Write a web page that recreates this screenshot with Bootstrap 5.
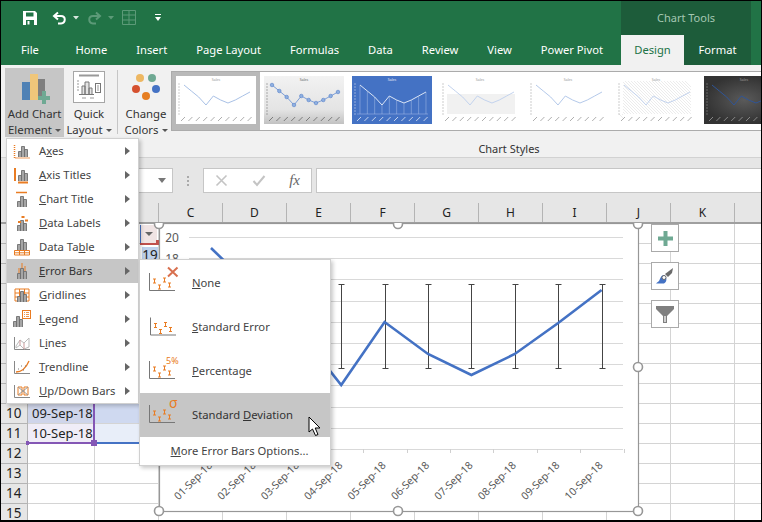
<!DOCTYPE html>
<html lang="en">
<head>
  <meta charset="UTF-8" />
  <title>Excel - Add Chart Element</title>
  <link href="https://cdn.jsdelivr.net/npm/bootstrap@5.3.0/dist/css/bootstrap.min.css" rel="stylesheet"/>
  <style>
    body { margin: 0; background: #fff; font-family: "Noto Sans", "Liberation Sans", sans-serif; font-size: 12px; }
    .app { position: relative; width: 762px; height: 522px; overflow: hidden; color: #333; }
    .app::after { content: ""; position: absolute; inset: 0; border: 1px solid #000; border-bottom-width: 2px; pointer-events: none; }

    .titlebar { background: #217346; height: 65px; }
    .qat { height: 35px; padding-left: 22px; }
    .q-undo { margin-left: 14px; }
    .q-more { margin-left: 19px; }
    .chart-tools { width: 130px; margin-right: 11px; background: #1d5c3a; color: #a4c7b2; font-size: 11px; line-height: 35px; text-align: center; }
    .tabs { height: 30px; padding-right: 11px; white-space: nowrap; }
    .tabs .nav-link { color: #fff; padding: 0 14.5px; line-height: 30px; font-size: 11.2px; }
    .tabs .nav-link.first { padding: 0 22px 0 21px; }
    .tabs .nav-link.tool { background: #1d5c3a; padding: 0; width: 67px; text-align: center; }
    .tabs .nav-link.current { background: #f1f1f1; color: #217346; padding: 0; width: 63px; text-align: center; }

    .ribbon { background: #f1f1f1; height: 93px; border-bottom: 1px solid #d2d2d2; padding: 3px 0 0 5px; overflow: hidden; }
    .rb-btn { height: 69px; text-align: center; line-height: 16px; font-size: 11.4px; color: #333; flex: none; white-space: nowrap; }
    .rb-btn svg { display: block; margin: 0 auto 1px; }
    .rb-btn.hot { background: #c6c6c6; }
    .rb-btn .caret { display: inline-block; border: 3px solid transparent; border-top: 3px solid #555; border-bottom: 0; margin-left: 3px; vertical-align: 2px; }
    .rb-add { width: 59px; }
    .rb-quick { width: 46px; margin-left: 2px; }
    .rb-colors { width: 50px; margin-left: 3px; }
    .rb-sep { width: 1px; height: 64px; background: #c6c6c6; margin: 2px 0 0 5px; flex: none; }
    .styles-group { width: 676px; flex: none; }
    .gallery { height: 60px; margin-top: 3px; background: #fff; border: 1px solid #ababab; border-width: 1px 0 1px 1px; overflow: hidden; }
    .thumb { width: 88px; height: 58px; padding: 4px; flex: none; }
    .thumb.selected { background: #b9b9b9; }
    .thumb svg { display: block; }
    .group-label { line-height: 17px; margin-top: 9px; text-align: center; font-size: 11px; color: #333; }

    .formula { background: #e6e6e6; height: 45px; padding: 10px 0 10px 6px; }
    .fbox { background: #fff; border: 1px solid #c6c6c6; height: 25px; }
    .namebox { width: 167px; padding-right: 6px; }
    .namebox i { border: 4px solid transparent; border-top: 5px solid #777; border-bottom: 0; }
    .grip { width: 30px; }
    .grip i { width: 2px; height: 2px; background: #aaa; display: block; margin: 1px auto; }
    .fxbox { width: 109px; padding: 0 11px; margin-right: 4px; }
    .fx { font-family: "Liberation Serif", serif; font-style: italic; font-size: 15px; color: #666; }

    .sheet { table-layout: fixed; width: 762px; font-size: 13.5px; color: #222; }
    .sheet th, .sheet td { height: 20px; padding: 0; border: 1px solid #d4d4d4; line-height: 18px; white-space: nowrap; font-weight: 400; overflow: hidden; }
    .sheet thead th { background: #e6e6e6; border-color: #b4b4b4; border-bottom: 2px solid #9f9f9f; border-top: 0; text-align: center; font-size: 12px; color: #222; }
    .sheet tbody th { background: #e6e6e6; border-color: #b4b4b4; text-align: center; border-left: 0; }
    .sheet td.date { padding-left: 4px; font-size: 13px; }
    .sel1 { background: #cfd5ea; } .sel2 { background: #cfd9f0; }
    .sel3 { background: #f0edf7; } .sel4 { background: #e8eef9; }

    .filter-btn { position: absolute; left: 140px; top: 225px; width: 17px; height: 18px; background: #f0e4e4; border-left: 1px solid #4472c4; }
    .filter-btn::after { content: ""; position: absolute; left: 4px; top: 7px; border: 4px solid transparent; border-top: 4px solid #666; border-bottom: 0; }
    .red-range { position: absolute; left: 140px; top: 243px; width: 17px; height: 2px; background: #c0504d; }
    .red-range::after { content: ""; position: absolute; right: -2px; top: -3px; width: 3px; height: 5px; background: #c0504d; }
    .cell-19 { position: absolute; left: 142px; top: 247px; width: 16px; height: 18px; background: #bdd0ec; font-size: 13.5px; line-height: 17px; color: #222; text-align: center; }
    .range { position: absolute; left: 27px; top: 402px; width: 68px; height: 42px; border-right: 2px solid #8457b5; border-bottom: 2px solid #8457b5; }
    .range::before { content: ""; position: absolute; left: -1px; bottom: -3px; width: 3px; height: 4px; background: #8457b5; }
    .range::after { content: ""; position: absolute; right: -4px; bottom: -4px; width: 6px; height: 6px; background: #8457b5; }
    .blue-range { position: absolute; left: 97px; top: 442px; width: 43px; height: 2px; background: #4472c4; }

    .chart { position: absolute; left: 150px; top: 223px; width: 498px; height: 299px; display: block; }
    .side-btn { position: absolute; left: 651px; width: 28px; height: 28px; background: #fff; border: 1px solid #aaa; }
    .side-1 { top: 224px; } .side-2 { top: 262px; } .side-3 { top: 300px; }

    .xl-menu { background: #fff; border: 1px solid #d0d0d0; border-radius: 0; padding: 0; min-width: 0; font-size: 11.25px; box-shadow: 2px 2px 4px rgba(0,0,0,.22); }
    .main-menu { left: 6px; top: 138px; width: 133px; height: 266px; }
    .sub-menu { left: 139px; top: 259px; width: 192px; height: 207px; padding-top: 1px; }
    .xl-menu .dropdown-item { color: #444; padding: 0; display: flex; align-items: center; background: transparent; }
    .xl-menu .dropdown-item.hot { background: #c6c6c6; color: #333; }
    .main-menu .dropdown-item { height: 24px; padding-left: 5px; }
    .main-menu .dropdown-item svg { margin-right: 7px; flex: none; }
    .main-menu .dropdown-item::after { content: ""; margin-left: auto; margin-right: 8px; border: 4.5px solid transparent; border-left: 5px solid #666; border-right: 0; }
    .sub-menu .dropdown-item { height: 44px; padding-left: 9px; }
    .sub-menu .dropdown-item svg { margin-right: 8px; flex: none; }
    .sub-menu .more { height: 29px; justify-content: center; }
    .cursor { position: absolute; left: 308px; top: 416px; z-index: 1001; }
  </style>
</head>
<body>
<svg width="0" height="0" class="position-absolute">
  <defs>
    <g id="bars">
      <path d="M5.5 15V9.5H8.5V15M8.5 15V4.5H11.5V15M11.5 15V7.5H14.5V15" fill="#a6a6a6" stroke="#6f6f6f" stroke-width=".9"/>
    </g>
    <g id="ebars" fill="none" stroke="#e97c23" stroke-width="1">
      <path d="M4 8h3M5.5 8v4M4 12h3"/>
      <path d="M9 14h3M10.500 14v4M9 18h3"/>
      <path d="M14 7h3M15.500 7v4M14 11h3"/>
      <path d="M19 12h3M20.500 12v4M19 16h3"/>
      <path d="M.5 2V19.500H26" stroke="#777"/>
    </g>
    <linearGradient id="silver" x1="0" y1="0" x2="0" y2="1">
      <stop offset="0" stop-color="#f2f2f2"/><stop offset=".7" stop-color="#e4e4e4"/><stop offset="1" stop-color="#c2c2c2"/>
    </linearGradient>
    <radialGradient id="coal"><stop offset="0" stop-color="#5a5a5a"/><stop offset="1" stop-color="#333"/></radialGradient>
  </defs>
</svg>

<div class="app">
  <div class="titlebar">
    <div class="qat d-flex align-items-center">
      <svg width="16" height="16" viewBox="0 0 16 16"><path d="M1 1H13L15 3V15H1Z" fill="#fff"/><path d="M4 2.500H11.500V6.500H4Z" fill="#217346"/><path d="M4 10H12V15H4Z" fill="#217346"/><path d="M5.500 11H7.500V14.500H5.500Z" fill="#fff"/></svg>
      <svg class="q-undo" width="15" height="14" viewBox="0 0 15 14"><path d="M6 1.500L2 5L6 8.500M2 5H9C14 5 14 12 9 12.500H6" fill="none" stroke="#fff" stroke-width="2"/></svg>
      <svg class="ms-1" width="12" height="6" viewBox="0 0 12 6"><path d="M2 1H8L5 4.500Z" fill="#d7e7de"/></svg>
      <svg class="ms-1" width="15" height="14" viewBox="0 0 15 14"><path d="M9 1.500L13 5L9 8.500M13 5H6C1 5 1 12 6 12.500H9" fill="none" stroke="#5c9a78" stroke-width="2"/></svg>
      <svg class="ms-1" width="12" height="6" viewBox="0 0 12 6"><path d="M2 1H8L5 4.500Z" fill="#5c9a78"/></svg>
      <svg class="ms-1" width="14" height="15" viewBox="0 0 14 15"><path d="M.5.5H13.500V14.500H.5ZM.5 5H13.500M.5 10H13.500M7 .5V14.500" fill="none" stroke="#5c9a78"/></svg>
      <svg class="q-more" width="6" height="8" viewBox="0 0 6 8"><path d="M0 0H6V1H0ZM0 3H6L3 7Z" fill="#fff"/></svg>
      <div class="chart-tools ms-auto">Chart Tools</div>
    </div>
    <ul class="nav tabs flex-nowrap">
      <li class="nav-item"><a class="nav-link first" href="#">File</a></li>
      <li class="nav-item"><a class="nav-link" href="#">Home</a></li>
      <li class="nav-item"><a class="nav-link" href="#">Insert</a></li>
      <li class="nav-item"><a class="nav-link" href="#">Page Layout</a></li>
      <li class="nav-item"><a class="nav-link" href="#">Formulas</a></li>
      <li class="nav-item"><a class="nav-link" href="#">Data</a></li>
      <li class="nav-item"><a class="nav-link" href="#">Review</a></li>
      <li class="nav-item"><a class="nav-link" href="#">View</a></li>
      <li class="nav-item"><a class="nav-link" href="#">Power Pivot</a></li>
      <li class="nav-item ms-auto"><a class="nav-link current" href="#">Design</a></li>
      <li class="nav-item"><a class="nav-link tool" href="#">Format</a></li>
    </ul>
  </div>

  <div class="ribbon d-flex">
    <div class="rb-btn rb-add hot">
      <svg width="59" height="37" viewBox="5 68 59 37"><rect x="22" y="82" width="8" height="18" fill="#4f81b5"/><rect x="30" y="74" width="8" height="26" fill="#efc67a"/><rect x="38" y="79" width="7" height="18" fill="#7f7f7f"/><path d="M38 96H42V91H46V96H50V100H46V104H42V100H38Z" fill="#6fa993"/></svg>
      Add Chart<br>Element<span class="caret"></span>
    </div>
    <div class="rb-btn rb-quick">
      <svg width="34" height="37" viewBox="0 -3 34 37"><rect x="1.500" y=".5" width="31" height="31" fill="#fff" stroke="#a6a6a6"/><path d="M7 4.500H27" stroke="#999" stroke-width="2"/><path d="M10 23V15H13V23M13 23V11H17V23M17 23V17H20V23M7 23.500H22" fill="#e4e4e4" stroke="#777"/><rect x="23.500" y="12.500" width="5" height="9" fill="#fff" stroke="#777"/><path d="M25 15h2M25 17h2M25 19h2M5 10h2M5 13h2M5 16h2M5 19h2M10 27h4M18 27h4" stroke="#999"/></svg>
      Quick<br>Layout<span class="caret"></span>
    </div>
    <div class="rb-sep"></div>
    <div class="rb-colors rb-btn">
      <svg width="36" height="37" viewBox="1 0 36 37"><circle cx="13" cy="10" r="4" fill="#edb762"/><circle cx="25" cy="10" r="4" fill="#6fa993"/><circle cx="9" cy="21" r="4" fill="#d5512f"/><circle cx="29" cy="21" r="4" fill="#4472c4"/><circle cx="19" cy="28" r="4" fill="#e67e22"/></svg>
      Change<br>Colors<span class="caret"></span>
    </div>
    <div class="styles-group">
      <div class="gallery d-flex" id="gallery"></div>
      <div class="group-label">Chart Styles</div>
    </div>
  </div>

  <div class="formula d-flex">
    <div class="fbox namebox d-flex align-items-center justify-content-end"><i></i></div>
    <div class="grip d-flex flex-column justify-content-center"><i></i><i></i><i></i></div>
    <div class="fbox fxbox d-flex align-items-center justify-content-between">
      <svg width="13" height="13" viewBox="0 0 13 13"><path d="M1.500 1.500L11.500 11.500M11.500 1.500L1.500 11.500" stroke="#c4c4c4" stroke-width="1.600"/></svg>
      <svg width="14" height="13" viewBox="0 0 14 13"><path d="M1.500 7L5 11L12.500 2" fill="none" stroke="#c4c4c4" stroke-width="2"/></svg>
      <span class="fx">fx</span>
    </div>
    <div class="fbox flex-grow-1"></div>
  </div>

  <table class="sheet" id="sheet">
    <colgroup><col style="width:27px"><col style="width:67px"><col style="width:64px"><col style="width:64px"><col style="width:64px"><col style="width:64px"><col style="width:64px"><col style="width:64px"><col style="width:64px"><col style="width:64px"><col style="width:64px"><col style="width:64px"><col></colgroup>
    <thead><tr><th></th><th></th><th></th><th>C</th><th>D</th><th>E</th><th>F</th><th>G</th><th>H</th><th>I</th><th>J</th><th>K</th><th></th></tr></thead>
    <tbody></tbody>
  </table>

  <div class="filter-btn"></div>
  <div class="red-range"></div>
  <div class="cell-19">19</div>
  <div class="range"></div>
  <div class="blue-range"></div>

  <svg class="chart" id="chart" viewBox="150 223 498 299" font-family="Noto Sans, sans-serif"></svg>

  <div class="side-btn side-1 d-flex align-items-center justify-content-center">
    <svg width="15" height="15" viewBox="0 0 15 15"><path d="M5.500 0H9.500V5.500H15V9.500H9.500V15H5.500V9.500H0V5.500H5.500Z" fill="#6fa993"/></svg>
  </div>
  <div class="side-btn side-2 d-flex align-items-center justify-content-center">
    <svg width="18" height="18" viewBox="0 0 18 18"><path d="M17 1L16 6L12 10L9 7Z" fill="#6b6b6b"/><path d="M9 8.500C6 7 5 10 3.500 13C3 14.500 1.500 15 0 16.500H8C11 15 11 11 9 8.500Z" fill="#4472c4"/><circle cx="8" cy="10.500" r="2" fill="#fff" stroke="#6b6b6b"/></svg>
  </div>
  <div class="side-btn side-3 d-flex align-items-center justify-content-center">
    <svg width="18" height="17" viewBox="0 0 18 17"><path d="M0 0H18V3L11 10V17H7V10L0 3Z" fill="#7f7f7f"/><path d="M8 10H10V16H8Z" fill="#cfcfcf"/></svg>
  </div>

  <div class="dropdown-menu show xl-menu main-menu">
    <a class="dropdown-item" href="#"><svg width="20" height="18" viewBox="0 0 18 18"><use href="#bars"/><path d="M1.500 3V16H17" fill="none" stroke="#e97c23" stroke-width="1.500" stroke-dasharray="1 1"/></svg><span>A<u>x</u>es</span></a>
    <a class="dropdown-item" href="#"><svg width="20" height="18" viewBox="0 0 18 18"><use href="#bars"/><path d="M2 2V15M5 16.500H15" fill="none" stroke="#e97c23" stroke-width="2"/></svg><span><u>A</u>xis Titles</span></a>
    <a class="dropdown-item" href="#"><svg width="20" height="18" viewBox="0 0 18 18"><use href="#bars" y="2" x="-1"/><path d="M3 2.500H14" stroke="#e97c23" stroke-width="1.500"/></svg><span><u>C</u>hart Title</span></a>
    <a class="dropdown-item" href="#"><svg width="20" height="18" viewBox="0 0 18 18"><use href="#bars" y="2" x="-1"/><path d="M5 8h3M8.500 3h3M12 6.500h3" stroke="#e97c23" stroke-width="2"/></svg><span><u>D</u>ata Labels</span></a>
    <a class="dropdown-item" href="#"><svg width="20" height="18" viewBox="0 0 18 18"><use href="#bars" y="-3" x="-1"/><path d="M1.500 12.500H16.500V17H1.500ZM1.500 14.800H16.500M6.500 12.500V17M11.500 12.500V17" fill="none" stroke="#e97c23"/></svg><span>Data Ta<u>b</u>le</span></a>
    <a class="dropdown-item hot" href="#"><svg width="20" height="18" viewBox="0 0 18 18"><use href="#bars" x="-1" y="2"/><path d="M6 6V11M9 1V6M12 4V9" stroke="#e97c23"/></svg><span><u>E</u>rror Bars</span></a>
    <a class="dropdown-item" href="#"><svg width="20" height="18" viewBox="0 0 18 18"><path d="M2 3H16V15H2ZM2 7H16M2 11H16M6.500 3V15M11.500 3V15" fill="none" stroke="#e97c23"/><use href="#bars" x="-1" y="1"/></svg><span><u>G</u>ridlines</span></a>
    <a class="dropdown-item" href="#"><svg width="20" height="18" viewBox="0 0 18 18"><use href="#bars" x="-5" y="2"/><rect x="9.500" y=".5" width="8" height="8" fill="#fff" stroke="#e97c23"/><path d="M11 2.500h1M13 2.500h3M11 4.500h1M13 4.500h3M11 6.500h1M13 6.500h3" stroke="#e97c23" stroke-width=".8"/></svg><span><u>L</u>egend</span></a>
    <a class="dropdown-item" href="#"><svg width="20" height="18" viewBox="0 0 18 18"><path d="M1.500 3V15.500H17" fill="none" stroke="#888"/><path d="M3 12L7 6L11 9L16 4V13L11 15L7 11L3 14Z" fill="none" stroke="#bbb"/><path d="M7 6V11M11 9V15" stroke="#c99"/></svg><span>L<u>i</u>nes</span></a>
    <a class="dropdown-item" href="#"><svg width="20" height="18" viewBox="0 0 18 18"><path d="M1.500 3V15.500H17" fill="none" stroke="#888"/><path d="M3 14C9 14 13 10 16 3" fill="none" stroke="#e97c23" stroke-width="1.300"/><path d="M5 11h1M8 8h1M12 8h1M10 12h1" stroke="#777"/></svg><span><u>T</u>rendline</span></a>
    <a class="dropdown-item" href="#"><svg width="20" height="18" viewBox="0 0 18 18"><path d="M1.500 3V15.500H17" fill="none" stroke="#888"/><path d="M5 5H9V13H5ZM11 5H15V13H11Z" fill="none" stroke="#e97c23"/><path d="M5 5L15 13M15 5L5 13" stroke="#999"/></svg><span><u>U</u>p/Down Bars</span></a>
  </div>

  <div class="dropdown-menu show xl-menu sub-menu">
    <a class="dropdown-item" href="#"><svg width="35" height="44" viewBox="0 -6 35 44"><g transform="translate(0 4)"><use href="#ebars"/></g><path d="M19 .5L28.500 9.500M28.500 .5L19 9.500" stroke="#d8704f" stroke-width="2"/></svg><span><u>N</u>one</span></a>
    <a class="dropdown-item" href="#"><svg width="35" height="44" viewBox="0 -6 35 44"><g transform="translate(1 4.500)"><use href="#ebars"/></g></svg><span><u>S</u>tandard Error</span></a>
    <a class="dropdown-item" href="#"><svg width="35" height="44" viewBox="0 -6 35 44"><g transform="translate(0 4)"><use href="#ebars"/></g><text x="17" y="9" font-size="9" fill="#e97c23" font-family="Noto Sans, sans-serif">5%</text></svg><span><u>P</u>ercentage</span></a>
    <a class="dropdown-item hot" href="#"><svg width="35" height="44" viewBox="0 -6 35 44"><g transform="translate(0 4)"><use href="#ebars"/></g><text x="20" y="9" font-size="14" fill="#e97c23" font-family="Noto Sans, sans-serif">σ</text></svg><span>Standard <u>D</u>eviation</span></a>
    <a class="dropdown-item more" href="#"><span><u>M</u>ore Error Bars Options...</span></a>
  </div>

  <svg class="cursor" width="14" height="21" viewBox="0 0 14 21"><path d="M1 1V16L4.500 13L7.500 19.500L10 18.500L7.200 12H12Z" fill="#fff" stroke="#000"/></svg>
</div>

<script>
  // worksheet rows, only the row numbers the menus leave in view
  const rows = [];
  for (let r = 1; r <= 15; r++) {
    let a = '>', b = '>', rest = '';
    if (r === 10) { a = 'class="date sel1">09-Sep-18'; b = 'class="sel2">'; }
    if (r === 11) { a = 'class="date sel3">10-Sep-18'; b = 'class="sel4">'; }
    for (let c = 0; c < 10; c++) rest += '<td></td>';
    rows.push(`<tr><th>${r >= 10 ? r : ''}</th><td ${a}</td><td ${b}</td>${rest}</tr>`);
  }
  document.querySelector('#sheet tbody').innerHTML = rows.join('');

  // main chart, drawn in page coordinates
  const ys = [248, 290, 330, 385, 322, 354, 375, 354, 323, 290];
  const xs = ys.map((_, i) => 211 + 43.4 * i);
  let s = '<rect x="159.5" y="223.500" width="479" height="288" fill="#fff" stroke="#979797" stroke-width="1.200"/>';
  for (let k = 0; k <= 10; k++) {
    const y = Math.round(237 + 21.2 * k) + .5;
    s += `<path d="M189 ${y}H623" stroke="#d9d9d9" stroke-width="1"/>`;
  }
  ['20', '18'].forEach((t, k) => {
    s += `<text x="172" y="${242 + 21 * k}" font-size="12" fill="#595959" text-anchor="middle">${t}</text>`;
  });
  for (let i = 0; i <= 10; i++) {
    const x = Math.round(189.5 + 43.4 * i) + .5;
    s += `<path d="M${x} 449V453" stroke="#d0d0d0"/>`;
  }
  xs.forEach(x => {
    const e = Math.round(x) + .5;
    s += `<path d="M${e} 284V368M${e - 3} 284.500H${e + 3}M${e - 3} 368.500H${e + 3}" stroke="#444" stroke-width="1" fill="none"/>`;
  });
  s += `<polyline points="${xs.map((x, i) => x + ',' + ys[i]).join(' ')}" fill="none" stroke="#4472c4" stroke-width="2.600"/>`;
  xs.forEach((x, i) => {
    const d = String(i + 1).padStart(2, '0');
    s += `<text transform="translate(${x + 2} 466) rotate(-45)" text-anchor="end" font-size="10.500" fill="#595959">${d}-Sep-18</text>`;
  });
  [[159, 224], [398, 224], [638, 224], [638, 367], [159, 511], [398, 511], [638, 511]].forEach(h => {
    s += `<circle cx="${h[0]}" cy="${h[1]}" r="4.500" fill="#fff" stroke="#979797" stroke-width="1.600"/>`;
  });
  document.getElementById('chart').innerHTML = s;

  // chart style thumbnails
  const pts = [9, 15, 21, 29, 20, 24, 27, 24, 20, 16].map((y, i) => [8 + i * 7.33, y]);
  const line = pts.map(p => p.join(',')).join(' ');
  function thumb(o) {
    let t = `<svg width="80" height="48" viewBox="0 0 80 48" font-family="Noto Sans, sans-serif"><rect width="80" height="48" fill="${o.bg}"/>`;
    if (o.extra) t += o.extra;
    t += `<text x="40" y="5" font-size="3.500" text-anchor="middle" fill="${o.ink}">Sales</text>`;
    for (let i = 0; i < 10; i++) t += `<path d="M${5 + i * 7.4} 45L${9 + i * 7.4} 41" stroke="${o.ink}" stroke-width=".8"/>`;
    for (let i = 0; i < 11; i++) t += `<path d="M2 ${8 + i * 3}H4" stroke="${o.ink}" stroke-width=".5"/>`;
    t += `<polyline points="${line}" fill="none" stroke="${o.line}" stroke-width="1"/>`;
    if (o.marks) pts.forEach(p => { t += `<circle cx="${p[0]}" cy="${p[1]}" r="1.800" fill="#8fb0e0" stroke="#4472c4" stroke-width=".5"/>`; });
    return t + '</svg>';
  }
  const drops = pts.map(p => `<path d="M${p[0]} ${p[1]}V38" stroke="#a9bfe8" stroke-width=".5"/>`).join('') + '<path d="M5 38H76" stroke="#a9bfe8" stroke-width=".5"/>';
  let hatch = '';
  for (let i = -30; i < 72; i += 3) hatch += `<path d="M${Math.max(i, 7)} ${i < 7 ? 5 + 7 - i : 5}L${Math.min(i + 33, 75)} ${i + 33 > 75 ? 38 - (i + 33 - 75) : 38}" stroke="#d0d0d0" stroke-width=".4"/>`;
  const styles = [
    { bg: '#fff', ink: '#999', line: '#a9c1e6' },
    { bg: 'url(#silver)', ink: '#666', line: '#7d9fd8', marks: true },
    { bg: '#4472c4', ink: '#e4ebf7', line: '#dbe5f5', extra: drops },
    { bg: '#fff', ink: '#999', line: '#c3d3ee', extra: '<rect x="7" y="18" width="68" height="20" fill="#f1f1f1"/>' },
    { bg: '#fff', ink: '#999', line: '#b4c9ea' },
    { bg: '#fff', ink: '#999', line: '#c3d3ee', extra: hatch },
    { bg: 'url(#coal)', ink: '#9a9a9a', line: '#2f5597' }
  ];
  document.getElementById('gallery').innerHTML = styles.map((o, i) =>
    `<div class="thumb${i === 0 ? ' selected' : ''}">${thumb(o)}</div>`).join('');
</script>
</body>
</html>
